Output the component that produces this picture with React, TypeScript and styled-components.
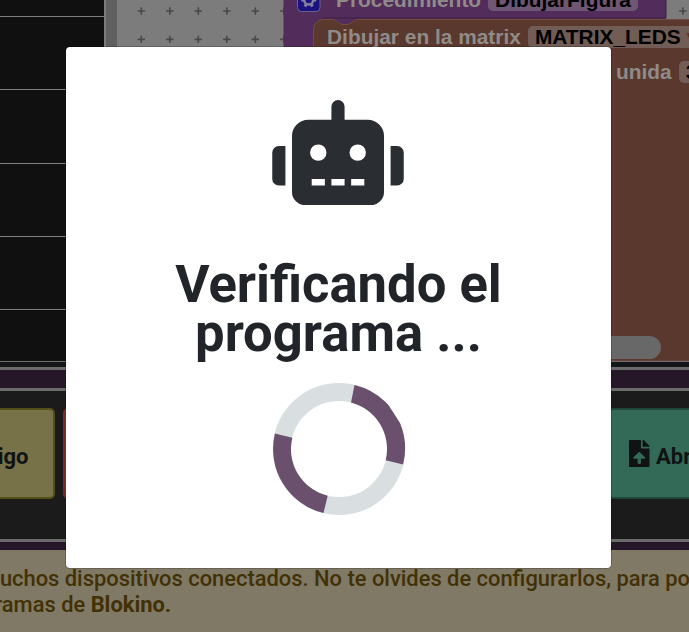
import React from "react";
import styled, { createGlobalStyle } from "styled-components";
import { FaRobot, FaFileUpload } from "react-icons/fa";

const GlobalStyle = createGlobalStyle`
  * { box-sizing: border-box; }
  body { margin: 0; overflow: hidden; background: #1c1c1c; font-family: Roboto, sans-serif; }
`;

const Page = styled.div`
  position: relative;
  width: 689px;
  height: 632px;
  overflow: hidden;
  display: flex;
  flex-direction: column;
`;

const Editor = styled.section`
  height: 362px;
  flex: none;
  display: flex;
  border-bottom: 1px solid #6f7070;
`;

const Sidebar = styled.div`
  width: 104px;
  flex: none;
  background: #101010;
`;

const SidebarRow = styled.div<{ $height: number }>`
  height: ${(p) => p.$height}px;
  border-bottom: 1px solid #7b7f7f;
`;

const Gutter = styled.div`
  width: 13px;
  flex: none;
  background: #606060;
  border-left: 2px solid #7c7c7c;
`;

const Workspace = styled.div`
  position: relative;
  flex: 1;
  overflow: hidden;
  background: #7c7c7c;
`;

const CanvasDrawing = styled.svg`
  position: absolute;
  inset: 0;
`;

const BlockRow = styled.div<{ $x: number; $y: number }>`
  position: absolute;
  left: ${(p) => p.$x}px;
  top: ${(p) => p.$y}px;
  height: 24px;
  display: flex;
  align-items: center;
  gap: 7px;
  white-space: nowrap;
  color: #8f8b89;
  font: bold 20.9px/24px "Liberation Sans", sans-serif;
`;

const Field = styled.span<{ $tint: string }>`
  height: 22px;
  padding: 0 7px;
  border-radius: 5px;
  background: ${(p) => p.$tint};
  color: #000;
  line-height: 22px;
`;

const Caret = styled.span`
  margin-left: 6px;
  color: #5b382d;
`;

const ScrollHandle = styled.div`
  position: absolute;
  left: 300px;
  top: 336px;
  width: 243.500px;
  height: 23px;
  border-radius: 12px;
  background: #686868;
`;

const Divider = styled.div<{ $gap?: boolean; $height: number; $open?: boolean }>`
  flex: none;
  height: ${(p) => p.$height}px;
  margin-top: ${(p) => (p.$gap ? 5 : 0)}px;
  background: #261728;
  border-top: 3px solid #6c6b6c;
  border-bottom: ${(p) => (p.$open ? 0 : 3)}px solid #6c6b6c;
`;

const Lower = styled.div`
  flex: none;
  display: flex;
  flex-direction: column;
  background: #14161a;
`;

const Toolbar = styled.div`
  height: 148px;
  flex: none;
  display: flex;
  padding-top: 17px;
  background: #1b1b1b;
`;

const ActionButton = styled.button<{ $bg: string; $edge: string; $width: number; $offset: number; $pad: number }>`
  flex: none;
  width: ${(p) => p.$width}px;
  height: 91px;
  margin-left: ${(p) => p.$offset}px;
  padding: 6px 0 0 ${(p) => p.$pad}px;
  display: flex;
  align-items: center;
  gap: 6.500px;
  border: 2px solid ${(p) => p.$edge};
  border-radius: 5px;
  background: ${(p) => p.$bg};
  color: #101314;
  font: 700 22px Roboto, sans-serif;
  text-align: left;
`;

const UploadIcon = styled(FaFileUpload)`
  width: 20.500px;
  height: 27.300px;
  flex: none;
  margin-top: -6px;
`;

const Notice = styled.div`
  flex: 1;
  padding-top: 16px;
  background: #807966;
  color: #423105;
  font: 500 21.9px/26px Roboto, sans-serif;
  white-space: nowrap;
`;

const NoticeLine = styled.div<{ $shift: number }>`
  margin-left: ${(p) => p.$shift}px;
`;

const Dialog = styled.div`
  position: absolute;
  left: 65px;
  top: 46px;
  width: 547px;
  height: 523px;
  display: flex;
  flex-direction: column;
  align-items: center;
  padding-top: 53px;
  background: #fff;
  background-clip: padding-box;
  border: 1px solid rgba(0, 0, 0, 0.2);
  border-radius: 5px;
  color: #212529;
`;

const RobotIcon = styled(FaRobot)`
  width: 132px;
  height: 105.200px;
  flex: none;
  margin-right: 1px;
  color: #2a2d32;
`;

const Title = styled.h1`
  margin: 54.800px 0 0;
  width: 400px;
  font: 700 52.6px/49px Roboto, sans-serif;
  text-align: center;
`;

const Spinner = styled.svg`
  flex: none;
  margin-top: 24px;
`;

const crosses = [11, 39.4].flatMap((y) =>
  [24.3, 52.8, 81.3, 109.8, 138.3, 166.8, 565.8].map((x) => ({ x, y }))
);

function Blocks() {
  return (
    <Workspace>
      <CanvasDrawing width="572" height="361">
        {crosses.map(({ x, y }) => (
          <path key={`${x}-${y}`} d={`M${x - 3.7} ${y}h7.4M${x} ${y - 3.7}v7.4`} stroke="#484848" strokeWidth="1.6" />
        ))}
        <path d="M166.500 -5H549V19H240V40H198V361H166.500Z" fill="#522c5a" />
        <path d="M549 0V18H206" fill="none" stroke="#3c2142" />
        <path
          d="M196.500 361V31Q196.500 19.500 208 19.500H216.500L225 24.500H231L239.500 19.500H580V361Z"
          fill="#5a382d"
          stroke="#744b3e"
        />
        <rect x="180.500" y="-10.500" width="22.500" height="22" rx="4" fill="#1c1282" stroke="#69648f" />
        <g transform="translate(191.700 0)" fill="none" stroke="#85849c">
          <circle r="4.500" strokeWidth="2.600" />
          {[0, 60, 120, 180, 240, 300].map((a) => (
            <path key={a} d="M0 -5V-7.500" strokeWidth="3" transform={`rotate(${a + 30})`} />
          ))}
        </g>
      </CanvasDrawing>
      <BlockRow $x={219} $y={-12}>
        <span>Procedimiento</span>
        <Field $tint="#6e5674">DibujarFigura</Field>
      </BlockRow>
      <BlockRow $x={210} $y={25}>
        <span>Dibujar en la matrix</span>
        <Field $tint="#715d56">MATRIX_LEDS<Caret>▾</Caret></Field>
      </BlockRow>
      <BlockRow $x={499} $y={60}>
        <span>unida</span>
        <Field $tint="#715d56">3</Field>
      </BlockRow>
      <ScrollHandle />
    </Workspace>
  );
}

function LoadingRing() {
  return (
    <Spinner width="134" height="134" viewBox="-67 -67 134 134">
      <circle r="57" fill="none" stroke="#d9dfe1" strokeWidth="18" />
      <g fill="#6b506d">
        <path d="M15.500 -64.100A66 66 0 0 1 46.500 -47Q50 -44 52 -40L61 -26A66 66 0 0 1 64.100 15.500L46.700 11.300A48 48 0 0 0 12 -46.500Z" />
        <path d="M-15.500 64.100A66 66 0 0 1 -64.100 -15.500L-46.700 -11.300A48 48 0 0 0 -11.300 46.700Z" />
      </g>
      <path d="M47 -48L50.500 -43.500L62 -25L67 -28L57 -47Z" fill="#fff" />
    </Spinner>
  );
}

export default function App() {
  return (
    <Page>
      <GlobalStyle />
      <Editor>
        <Sidebar>
          {[17, 73, 74, 73, 73].map((height, i) => (
            <SidebarRow key={i} $height={height} />
          ))}
        </Sidebar>
        <Gutter />
        <Blocks />
      </Editor>
      <Lower>
        <Divider $gap $height={24} />
        <Toolbar>
          <ActionButton $bg="#777248" $edge="#554f18" $width={175} $offset={-120} $pad={76.5}>Código</ActionButton>
          <ActionButton $bg="#8f392f" $edge="#782b24" $width={300} $offset={8} $pad={20}>Cargar</ActionButton>
          <ActionButton $bg="#336957" $edge="#214739" $width={180} $offset={245} $pad={19}>
            <UploadIcon />
            Abrir
          </ActionButton>
        </Toolbar>
        <Divider $height={11} $open />
      </Lower>
      <Notice>
        <NoticeLine $shift={-19.2}>muchos dispositivos conectados. No te olvides de configurarlos, para poder</NoticeLine>
        <NoticeLine $shift={-18}>gramas de <b>Blokino.</b></NoticeLine>
      </Notice>
      <Dialog role="dialog">
        <RobotIcon />
        <Title>Verificando el programa ...</Title>
        <LoadingRing />
      </Dialog>
    </Page>
  );
}
